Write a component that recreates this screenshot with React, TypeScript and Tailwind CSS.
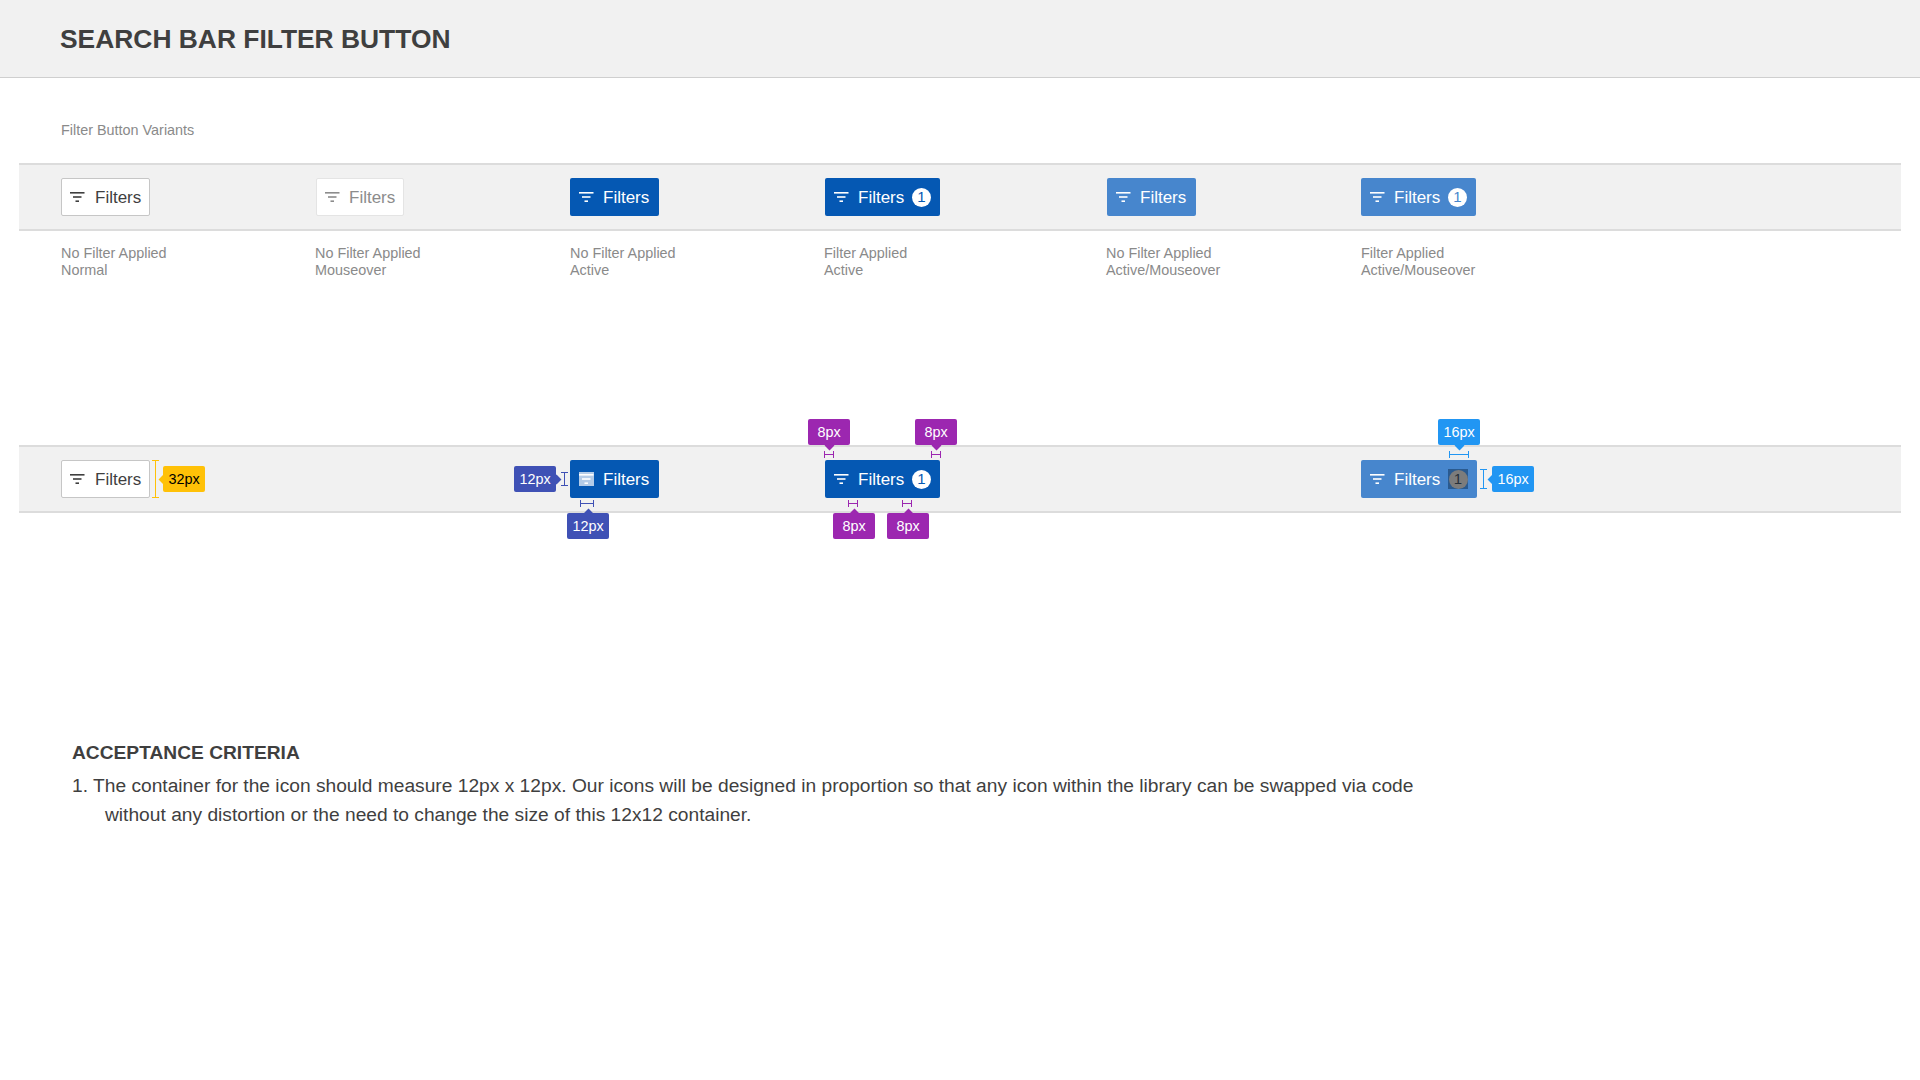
import React from "react";

const FilterIcon = ({ color }: { color: string }) => (
  <svg width="15" height="12" viewBox="0 0 15 12" className="shrink-0" fill={color}>
    <rect x="0" y="1" width="14.5" height="1.6" />
    <rect x="3" y="5.2" width="8.5" height="1.6" />
    <rect x="5.5" y="9.4" width="3.5" height="1.6" />
  </svg>
);

const HBracket = ({ w, color }: { w: number; color: string }) => (
  <svg width={w} height="7" viewBox={`0 0 ${w} 7`} className="block" stroke={color} fill="none" strokeWidth="1">
    <path d={`M0.5 0V7M${w - 0.5} 0V7M0 3.5H${w}`} />
  </svg>
);

const VBracket = ({ h, color }: { h: number; color: string }) => (
  <svg width="7" height={h} viewBox={`0 0 7 ${h}`} className="block" stroke={color} fill="none" strokeWidth="1">
    <path d={`M0 0.5H7M0 ${h - 0.5}H7M3.5 0V${h}`} />
  </svg>
);

const Tag = ({ text, className, arrow }: { text: string; className: string; arrow: "left" | "right" | "up" | "down" }) => (
  <div className={`absolute z-10 flex h-[26px] w-[42px] items-center justify-center rounded-[2px] pt-[1px] text-[14.4px] ${className}`}>
    {arrow === "left" && <span className="absolute left-[-3.5px] top-[9.5px] h-[7px] w-[7px] rotate-45 bg-inherit" />}
    {arrow === "right" && <span className="absolute right-[-3.5px] top-[9.5px] h-[7px] w-[7px] rotate-45 bg-inherit" />}
    {arrow === "up" && <span className="absolute left-[17.5px] top-[-3.5px] h-[7px] w-[7px] rotate-45 bg-inherit" />}
    {arrow === "down" && <span className="absolute bottom-[-3.5px] left-[17.5px] h-[7px] w-[7px] rotate-45 bg-inherit" />}
    <span className="relative">{text}</span>
  </div>
);

type Kind = "normal" | "hover" | "active" | "activeHover";

const styles: Record<Kind, { box: string; icon: string; badge: string; gap: string }> = {
  normal: { box: "bg-white border border-[#c6c6c6] text-[#3f3f3f] pl-[8px] pr-[8px]", icon: "#3f3f3f", badge: "", gap: "mr-[10px]" },
  hover: { box: "bg-white border border-[#e4e4e4] text-[#8c8c8c] pl-[8px] pr-[8px]", icon: "#8c8c8c", badge: "", gap: "mr-[9px]" },
  active: { box: "bg-[#0558b3] text-white pl-[9px] pr-[10px]", icon: "#ffffff", badge: "text-[#0558b3]", gap: "mr-[9px]" },
  activeHover: { box: "bg-[#4786cd] text-white pl-[9px] pr-[10px]", icon: "#ffffff", badge: "text-[#4786cd]", gap: "mr-[9px]" },
};

const FilterButton = ({
  kind,
  badge,
  iconMark,
  badgeMark,
  children,
}: {
  kind: Kind;
  badge?: boolean;
  iconMark?: boolean;
  badgeMark?: boolean;
  children?: React.ReactNode;
}) => {
  const s = styles[kind];
  return (
    <div className={`relative flex h-[38px] items-center rounded-[2px] text-[17px] ${s.box}`}>
      <span className={`flex h-[14px] w-[15px] items-center justify-center ${s.gap} ${iconMark ? "bg-[#b4cce8]" : ""}`}>
        <FilterIcon color={s.icon} />
      </span>
      <span className="w-[46px] translate-y-[1px] whitespace-nowrap">Filters</span>
      {badge &&
        (badgeMark ? (
          <span className="-mr-[1px] ml-[8px] flex h-[20px] w-[20px] items-center justify-center bg-[#2a5a8f]">
            <span className="flex h-[19px] w-[19px] items-center justify-center rounded-full bg-[#7c7c7c] text-[15px] text-[#26303a]">1</span>
          </span>
        ) : (
          <span className={`-mr-[1px] ml-[8px] flex h-[19px] w-[19px] items-center justify-center rounded-full bg-white text-[15px] ${s.badge}`}>1</span>
        ))}
      {children}
    </div>
  );
};

const Label = ({ a, b }: { a: string; b: string }) => (
  <div className="text-[14.4px] leading-[17px] text-[#8a8a8a]">
    {a}
    <br />
    {b}
  </div>
);

const rowBar = "ml-[19px] mr-[19px] flex h-[68px] items-center border-y-2 border-[#dcdcdc] bg-[#f1f1f1] pl-[42px]";

export default function App() {
  return (
    <div className="min-h-screen bg-white font-['Liberation_Sans',Arial,sans-serif] text-[#3f3f3f]">
      <header className="flex h-[78px] items-center border-b border-[#cfcfcf] bg-[#f1f1f1] pl-[60px] pt-[1px]">
        <h1 className="text-[26.4px] font-bold leading-none">SEARCH BAR FILTER BUTTON</h1>
      </header>

      <p className="pl-[61px] pt-[44px] text-[14.4px] leading-[17px] text-[#8a8a8a]">Filter Button Variants</p>

      <div className={`mt-[24px] ${rowBar}`}>
        <div className="w-[255px]"><div className="w-fit"><FilterButton kind="normal" /></div></div>
        <div className="w-[254px]"><div className="w-fit"><FilterButton kind="hover" /></div></div>
        <div className="w-[255px]"><div className="w-fit"><FilterButton kind="active" /></div></div>
        <div className="w-[282px]"><div className="w-fit"><FilterButton kind="active" badge /></div></div>
        <div className="w-[254px]"><div className="w-fit"><FilterButton kind="activeHover" /></div></div>
        <div><FilterButton kind="activeHover" badge /></div>
      </div>

      <div className="ml-[61px] mt-[14px] flex">
        <div className="w-[254px]"><Label a="No Filter Applied" b="Normal" /></div>
        <div className="w-[255px]"><Label a="No Filter Applied" b="Mouseover" /></div>
        <div className="w-[254px]"><Label a="No Filter Applied" b="Active" /></div>
        <div className="w-[282px]"><Label a="Filter Applied" b="Active" /></div>
        <div className="w-[255px]"><Label a="No Filter Applied" b="Active/Mouseover" /></div>
        <div><Label a="Filter Applied" b="Active/Mouseover" /></div>
      </div>

      <div className={`mt-[166px] ${rowBar}`}>
        <div className="w-[509px]">
          <div className="w-fit">
            <FilterButton kind="normal">
              <span className="absolute left-[90px] top-[-1px]"><VBracket h={38} color="#ffc107" /></span>
              <Tag text="32px" arrow="left" className="left-[101px] top-[5px] bg-[#ffc107] text-black" />
            </FilterButton>
          </div>
        </div>
        <div className="w-[255px]">
          <div className="w-fit">
            <FilterButton kind="active" iconMark>
              <Tag text="12px" arrow="right" className="left-[-56px] top-[6px] bg-[#3f51b5] text-white" />
              <span className="absolute left-[-9px] top-[12px]"><VBracket h={14} color="#3f51b5" /></span>
              <span className="absolute left-[10px] top-[40px]"><HBracket w={14} color="#3f51b5" /></span>
              <Tag text="12px" arrow="up" className="left-[-3px] top-[53px] bg-[#3f51b5] text-white" />
            </FilterButton>
          </div>
        </div>
        <div className="w-[536px]">
          <div className="w-fit">
            <FilterButton kind="active" badge>
              <Tag text="8px" arrow="down" className="left-[-17px] top-[-41px] bg-[#9c27b0] text-white" />
              <span className="absolute left-[-1px] top-[-9px]"><HBracket w={10} color="#9c27b0" /></span>
              <Tag text="8px" arrow="down" className="left-[90px] top-[-41px] bg-[#9c27b0] text-white" />
              <span className="absolute left-[106px] top-[-9px]"><HBracket w={10} color="#9c27b0" /></span>
              <span className="absolute left-[23px] top-[40px]"><HBracket w={10} color="#9c27b0" /></span>
              <Tag text="8px" arrow="up" className="left-[8px] top-[53px] bg-[#9c27b0] text-white" />
              <span className="absolute left-[77px] top-[40px]"><HBracket w={10} color="#9c27b0" /></span>
              <Tag text="8px" arrow="up" className="left-[62px] top-[53px] bg-[#9c27b0] text-white" />
            </FilterButton>
          </div>
        </div>
        <div>
          <FilterButton kind="activeHover" badge badgeMark>
            <Tag text="16px" arrow="down" className="left-[77px] top-[-41px] bg-[#2196f3] text-white" />
            <span className="absolute left-[88px] top-[-9px]"><HBracket w={20} color="#2196f3" /></span>
            <span className="absolute left-[119px] top-[9px]"><VBracket h={20} color="#2196f3" /></span>
            <Tag text="16px" arrow="left" className="left-[131px] top-[6px] bg-[#2196f3] text-white" />
          </FilterButton>
        </div>
      </div>

      <section className="pl-[72px] pt-[229px]">
        <h2 className="text-[19.2px] font-bold leading-[22px]">ACCEPTANCE CRITERIA</h2>
        <p className="mt-[7px] w-[1360px] pl-[33px] -indent-[33px] text-[19.2px] leading-[29px]">
          1. The container for the icon should measure 12px x 12px. Our icons will be designed in proportion so that any icon within the library can be swapped via code without any distortion or the need to change the size of this 12x12 container.
        </p>
      </section>
    </div>
  );
}
